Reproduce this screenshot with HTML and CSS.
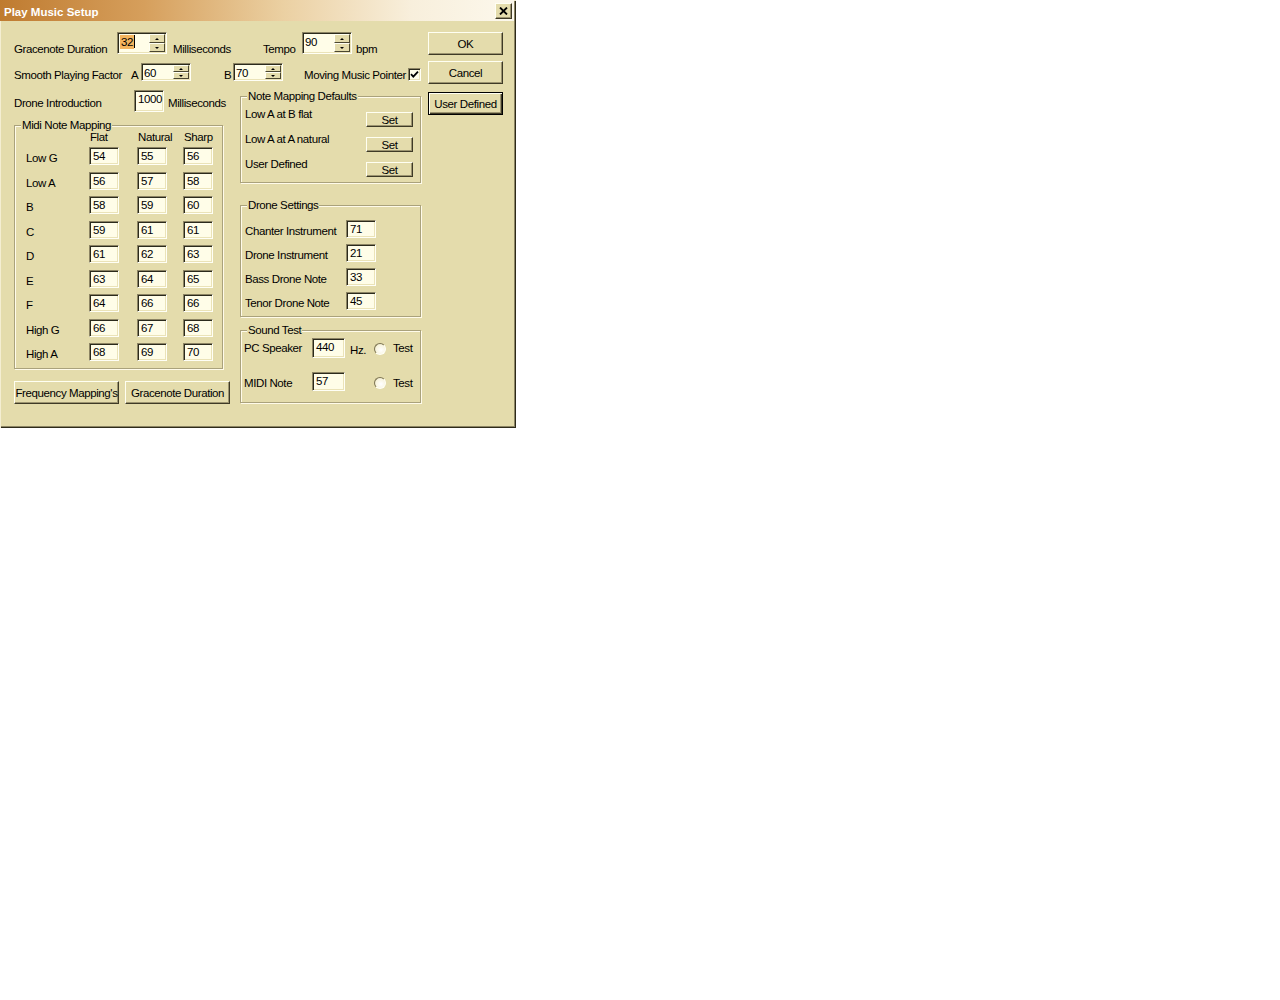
FILE: index.html
```html
<!DOCTYPE html>
<html>
<head>
  <meta charset="UTF-8" />
  <title>Play Music Setup</title>
  <link rel="stylesheet" href="styles.css">
</head>
<body>
<div class="dialog">
  <div class="titlebar">
    <span class="title">Play Music Setup</span>
    <span class="close">
      <svg width="9" height="8" viewBox="0 0 9 8"><path d="M1 0.5 L8 7.5 M8 0.5 L1 7.5" stroke="#000" stroke-width="1.8" fill="none"/></svg>
    </span>
  </div>

  <div class="client">
    <div class="main">
      <!-- top settings -->
      <div class="row row-one">
        <span class="lbl w-gracenote">Gracenote Duration</span>
        <span class="spin">
          <span class="spin-text"><span class="sel">32</span><span class="caret"></span></span>
          <span class="spin-btns"><span class="up"></span><span class="down"></span></span>
        </span>
        <span class="lbl w-ms">Milliseconds</span>
        <span class="lbl w-tempo">Tempo</span>
        <span class="spin">
          <span class="spin-text">90</span>
          <span class="spin-btns"><span class="up"></span><span class="down"></span></span>
        </span>
        <span class="lbl bpm">bpm</span>
      </div>

      <div class="row row-two">
        <span class="lbl w-smooth">Smooth Playing Factor</span>
        <span class="lbl w-a">A</span>
        <span class="spin short">
          <span class="spin-text">60</span>
          <span class="spin-btns"><span class="up"></span><span class="down"></span></span>
        </span>
        <span class="lbl w-b">B</span>
        <span class="spin short">
          <span class="spin-text">70</span>
          <span class="spin-btns"><span class="up"></span><span class="down"></span></span>
        </span>
        <span class="lbl w-pointer">Moving Music Pointer</span>
        <span class="check">
          <svg width="9" height="9" viewBox="0 0 9 9"><path d="M1 4.2 L3.3 6.6 L8 1.6" stroke="#000" stroke-width="1.8" fill="none"/></svg>
        </span>
      </div>

      <div class="split">
        <div class="col-left">
          <div class="row row-three">
            <span class="lbl w-drone">Drone Introduction</span>
            <span class="edit tall">1000</span>
            <span class="lbl ms-after">Milliseconds</span>
          </div>

          <div class="group midi">
            <span class="group-title">Midi Note Mapping</span>
            <div class="note-head">
              <span></span>
              <span class="col-head">Flat</span>
              <span class="col-head">Natural</span>
              <span class="col-head">Sharp</span>
            </div>
            <div class="note-grid">
              <span class="note">Low G</span><span class="edit">54</span><span class="edit">55</span><span class="edit">56</span>
              <span class="note">Low A</span><span class="edit">56</span><span class="edit">57</span><span class="edit">58</span>
              <span class="note">B</span><span class="edit">58</span><span class="edit">59</span><span class="edit">60</span>
              <span class="note">C</span><span class="edit">59</span><span class="edit">61</span><span class="edit">61</span>
              <span class="note">D</span><span class="edit">61</span><span class="edit">62</span><span class="edit">63</span>
              <span class="note">E</span><span class="edit">63</span><span class="edit">64</span><span class="edit">65</span>
              <span class="note">F</span><span class="edit">64</span><span class="edit">66</span><span class="edit">66</span>
              <span class="note">High G</span><span class="edit">66</span><span class="edit">67</span><span class="edit">68</span>
              <span class="note">High A</span><span class="edit">68</span><span class="edit">69</span><span class="edit">70</span>
            </div>
          </div>

          <div class="bottom-buttons">
            <span class="btn wide">Frequency Mapping's</span>
            <span class="btn wide">Gracenote Duration</span>
          </div>
        </div>

        <div class="col-right">
          <div class="group defaults">
            <span class="group-title">Note Mapping Defaults</span>
            <div class="map-row"><span class="lbl">Low A at B flat</span><span class="btn small">Set</span></div>
            <div class="map-row"><span class="lbl">Low A at A natural</span><span class="btn small">Set</span></div>
            <div class="map-row"><span class="lbl">User Defined</span><span class="btn small">Set</span></div>
          </div>

          <div class="group drones">
            <span class="group-title">Drone Settings</span>
            <div class="drone-grid">
              <span class="note">Chanter Instrument</span><span class="edit">71</span>
              <span class="note">Drone Instrument</span><span class="edit">21</span>
              <span class="note">Bass Drone Note</span><span class="edit">33</span>
              <span class="note">Tenor Drone Note</span><span class="edit">45</span>
            </div>
          </div>

          <div class="group sound">
            <span class="group-title">Sound Test</span>
            <div class="sound-row first">
              <span class="lbl w-sound">PC Speaker</span>
              <span class="edit wide-edit">440</span>
              <span class="lbl hz">Hz.</span>
              <span class="radio"></span>
              <span class="lbl test">Test</span>
            </div>
            <div class="sound-row second">
              <span class="lbl w-sound">MIDI Note</span>
              <span class="edit wide-edit">57</span>
              <span class="hz-space"></span>
              <span class="radio"></span>
              <span class="lbl test">Test</span>
            </div>
          </div>
        </div>
      </div>
    </div>

    <div class="side">
      <span class="btn side-btn">OK</span>
      <span class="btn side-btn cancel">Cancel</span>
      <span class="btn side-btn default">User Defined</span>
    </div>
  </div>
</div>
</body>
</html>
```

FILE: styles.css
```css
body {
  margin: 0;
  background: #fff;
  font-family: "Liberation Sans", Arial, sans-serif;
  font-size: 11.5px;
  letter-spacing: -0.4px;
  color: #000;
}

.dialog {
  width: 516px;
  height: 428px;
  box-sizing: border-box;
  background: #e4dcac;
  box-shadow: inset 1px 1px 0 #f4eed2, inset -1px -1px 0 #2e2b1a, inset -2px -2px 0 #8c8564;
}

/* caption */
.titlebar {
  height: 21px;
  margin-right: 2px;
  display: flex;
  justify-content: space-between;
  padding: 0 2px 0 4px;
  background: linear-gradient(to right, #bf7b30 0%, #d69f5c 28%, #ebd0a2 55%, #f8efdc 80%, #fcf8ec 100%);
}
.title {
  padding-top: 5px;
  line-height: 14px;
  font-size: 11.5px;
  font-weight: bold;
  letter-spacing: 0;
  color: #fff;
}
.close {
  margin-top: 3px;
  width: 17px;
  height: 16px;
  box-sizing: border-box;
  display: flex;
  align-items: center;
  justify-content: center;
  background: #e4dcac;
  border: 1px solid;
  border-color: #fffff2 #3e3a26 #3e3a26 #fffff2;
  box-shadow: inset -1px -1px 0 #9c9470;
}

.client {
  display: flex;
  padding: 11px 0 0 14px;
}
.main {
  width: 407px;
}
.side {
  margin-left: 7px;
  width: 75px;
  display: flex;
  flex-direction: column;
}

.row {
  display: flex;
  align-items: flex-start;
}
.lbl {
  line-height: 14px;
  white-space: nowrap;
}

.row-one { height: 22px; }
.row-one .lbl { margin-top: 10px; }
.w-gracenote { width: 103px; }
.w-ms { width: 90px; margin-left: 6px; }
.w-tempo { width: 39px; }
.bpm { margin-left: 4px; }

.row-two { height: 18px; margin-top: 9px; }
.row-two .lbl { margin-top: 5px; }
.w-smooth { width: 117px; }
.w-a { width: 10px; }
.w-b { width: 9px; margin-left: 33px; }
.w-pointer { width: 104px; margin-left: 21px; }

.row-three { height: 22px; margin-top: 9px; }
.row-three .lbl { margin-top: 6px; }
.w-drone { width: 120px; }
.ms-after { margin-left: 4px; }

/* sunken edit fields */
.edit, .spin, .check {
  box-sizing: border-box;
  background: #fffde8;
  border: 1px solid;
  border-color: #8c8464 #fffff6 #fffff6 #8c8464;
  box-shadow: inset 1px 1px 0 #2b2a1c, inset -1px -1px 0 #ebe3b8;
}
.edit {
  width: 30px;
  height: 18px;
  padding-left: 3px;
  line-height: 14px;
  padding-top: 1px;
}
.edit.tall { height: 22px; }
.wide-edit { width: 33px; }

.spin {
  width: 50px;
  height: 22px;
  display: flex;
}
.spin.short { height: 18px; }
.spin-text {
  flex: 1;
  padding: 2px 0 0 2px;
  line-height: 14px;
  display: flex;
  align-items: flex-start;
}
.sel {
  background: #f4b45e;
  padding: 0 1px;
}
.caret {
  width: 1px;
  height: 13px;
  background: #000;
}
.spin-btns {
  width: 16px;
  margin: 1px 1px 1px 0;
  display: flex;
  flex-direction: column;
}
.spin-btns span {
  flex: 1;
  box-sizing: border-box;
  display: flex;
  align-items: center;
  justify-content: center;
  background: #e4dcac;
  border: 1px solid;
  border-color: #fffff2 #4a4630 #4a4630 #fffff2;
}
.spin-btns .up::after,
.spin-btns .down::after {
  content: "";
  border-left: 2px solid transparent;
  border-right: 2px solid transparent;
}
.spin-btns .up::after { border-bottom: 2px solid #000; }
.spin-btns .down::after { border-top: 2px solid #000; }

.check {
  width: 13px;
  height: 13px;
  margin-top: 5px;
  display: flex;
  align-items: center;
  justify-content: center;
}

.radio {
  width: 12px;
  height: 12px;
  box-sizing: border-box;
  border-radius: 50%;
  border: 1px solid;
  border-color: #7c7454 #fffff6 #fffff6 #7c7454;
  background: radial-gradient(circle at 60% 60%, #ffffff 0%, #f8f4de 60%, #d8d0a4 100%);
}

/* etched group boxes */
.group {
  box-sizing: border-box;
  border: 1px solid #aaa27c;
  box-shadow: 1px 1px 0 #fffbea, inset 1px 1px 0 #fffbea;
}
.group-title {
  display: table;
  margin: -7px 0 0 6px;
  padding: 0 1px;
  line-height: 13px;
  background: #e4dcac;
  white-space: nowrap;
}

.split {
  display: flex;
}
.col-left {
  width: 226px;
}
.col-right {
  width: 181px;
}

.midi {
  width: 209px;
  height: 244px;
  margin-top: 13px;
  padding-left: 11px;
}
.midi .group-title { margin-left: -5px; }
.note-head,
.note-grid {
  display: grid;
  grid-template-columns: 63px 48px 46px 30px;
}
.note-head {
  margin-top: -2px;
  line-height: 14px;
}
.col-head { padding-left: 1px; }
.note-grid {
  margin-top: 3px;
  grid-auto-rows: 18px;
  row-gap: 6.5px;
}
.note {
  align-self: end;
  line-height: 14px;
  white-space: nowrap;
}

.bottom-buttons {
  display: flex;
  gap: 6px;
  margin-top: 12px;
}

/* raised buttons */
.btn {
  box-sizing: border-box;
  height: 23px;
  display: flex;
  align-items: center;
  justify-content: center;
  background: #e4dcac;
  border: 1px solid;
  border-color: #fffff2 #3e3a26 #3e3a26 #fffff2;
  box-shadow: inset -1px -1px 0 #9c9470;
  white-space: nowrap;
}
.btn.wide { width: 105px; }
.btn.small { width: 47px; height: 15px; margin-top: 5px; }
.side-btn { width: 75px; }
.side-btn.cancel { margin-top: 6px; }
.side-btn.default {
  margin-top: 8px;
  border: 1px solid #000;
  box-shadow: inset 1px 1px 0 #fffff2, inset -1px -1px 0 #3e3a26, inset -2px -2px 0 #9c9470;
}

.defaults {
  height: 87px;
  margin-top: 15px;
  padding: 0 7px 0 4px;
}
.defaults .group-title { margin-left: 2px; margin-bottom: 4px; }
.map-row {
  display: flex;
  justify-content: space-between;
  align-items: flex-start;
  height: 25px;
}

.drones {
  height: 112px;
  margin-top: 22px;
  padding-left: 4px;
}
.drones .group-title { margin-left: 2px; }
.drone-grid {
  display: grid;
  grid-template-columns: 101px 30px;
  grid-auto-rows: 18px;
  row-gap: 6px;
  margin-top: 8px;
}

.sound {
  height: 73px;
  margin-top: 13px;
  padding-left: 3px;
}
.sound .group-title { margin-left: 3px; }
.sound-row {
  display: flex;
  align-items: flex-start;
}
.sound-row.first { margin-top: 1px; height: 20px; }
.sound-row.first .edit { height: 20px; }
.sound-row.second { margin-top: 14px; height: 19px; }
.sound-row.second .edit { height: 19px; }
.w-sound { width: 68px; }
.first .w-sound { margin-top: 3px; }
.second .w-sound { margin-top: 4px; }
.hz { width: 24px; margin: 5px 0 0 5px; }
.hz-space { width: 29px; }
.sound-row .radio { margin-top: 5px; }
.test { margin-left: 7px; }
.first .test { margin-top: 3px; }
.second .test { margin-top: 4px; }
```
